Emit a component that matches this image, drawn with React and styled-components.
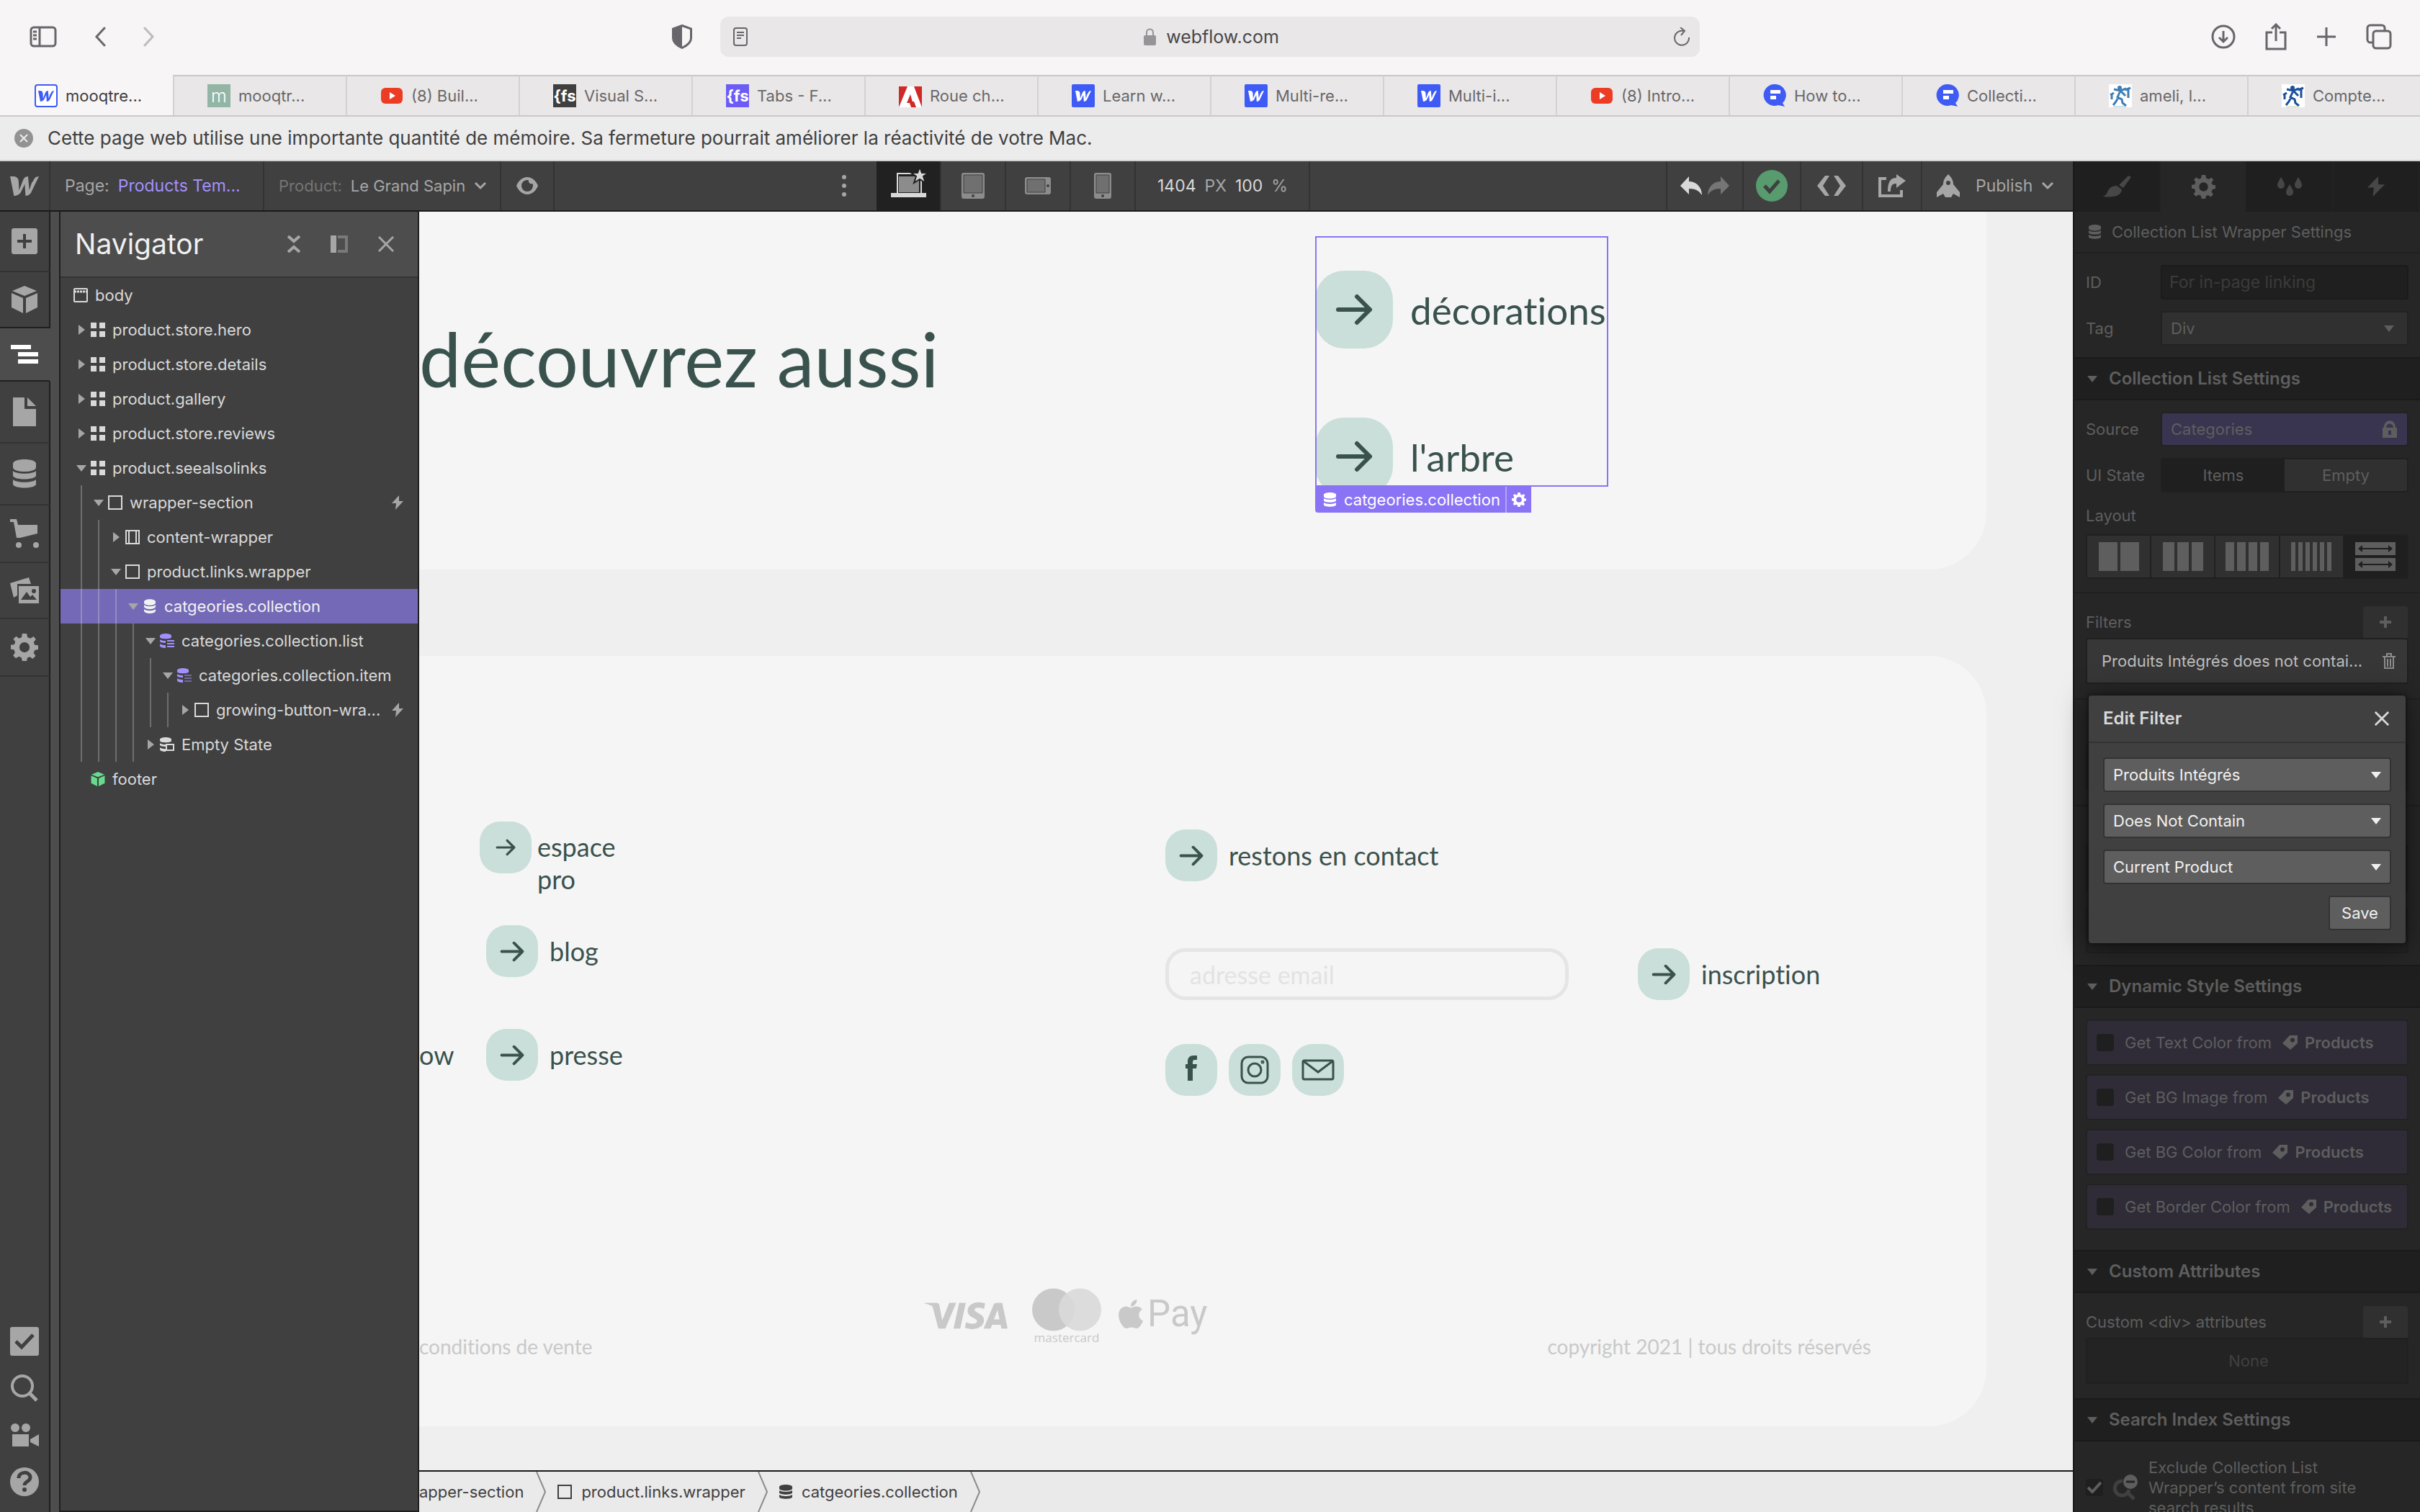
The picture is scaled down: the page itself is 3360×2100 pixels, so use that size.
import styled, { createGlobalStyle } from "styled-components";
import { FaApple } from "react-icons/fa";
import { SiVisa } from "react-icons/si";

const GlobalStyle = createGlobalStyle`
  * {
    box-sizing: border-box;
  }
  body {
    margin: 0;
    font-family: Inter, "Liberation Sans", sans-serif;
    font-size: 22px;
    line-height: 28px;
    background-color: #404040;
  }
  button, input, select {
    font: inherit;
    color: inherit;
  }
  button {
    border: 0;
    padding: 0;
    background: none;
  }
  svg {
    display: block;
    flex: none;
  }
  ul {
    list-style: none;
    margin: 0;
    padding: 0;
  }
`;

const Page = styled.div`
  display: flex;
  flex-direction: column;
  height: 100vh;
  overflow: hidden;
`;

/* ---------- icons ---------- */

const Icon = ({ w, h, box, children, ...rest }) => (
  <svg width={w} height={h || w} viewBox={box || `0 0 ${w} ${h || w}`} fill="currentColor" aria-hidden="true" {...rest}>
    {children}
  </svg>
);

const Line = ({ width = 2, children, ...rest }) => (
  <Icon fill="none" stroke="currentColor" strokeWidth={width} {...rest}>
    {children}
  </Icon>
);

const WebflowMark = ({ w }) => (
  <Icon w={w} h={Math.round((w * 27) / 40)} box="0 0 40 27">
    <path d="M30 9s-3 9.500-3.200 10.200C26.700 18.400 25 0 25 0c-4 0-6.200 2.800-7.300 5.900 0 0-4.800 12.500-5.200 13.600C12.400 18.500 11.800 6 11.800 6 11.500 2.200 8 0 5 0H0l5.400 27c4.300 0 8.600-2.500 10-6 0 0 4.800-9.800 5-10.200C20.400 11.200 21.600 27 21.600 27c4.300 0 7.100-2.800 8.200-5.900L40 0c-4.300 0-6.600 2.800-7.700 5.900z" />
  </Icon>
);

const Database = ({ w = 20, h }) => (
  <Icon w={w} h={h || w} box="0 0 32 40" preserveAspectRatio="none">
    <path d="M0 6c0-8 32-8 32 0v5c0 8-32 8-32 0z" />
    <path d="M0 16c5 5 27 5 32 0v7c-3 6-29 6-32 0z" />
    <path d="M0 28c5 5 27 5 32 0v7c-3 6-29 6-32 0z" />
  </Icon>
);

const ListDatabase = ({ kind }) => (
  <Icon w={20}>
    <path d="M0 3c0-4 16-4 16 0v2c0 3-16 3-16 0z" />
    <path d="M0 8c1 1.500 5 2 8 2v3c-4 0-8-1-8-2zM0 14c1 1.500 5 2 8 2v4c-4 0-8-1-8-3z" />
    {kind === "empty" ? (
      <path d="M8 9h12v10H8zm2 2v6h8v-6z" fillRule="evenodd" />
    ) : (
      <path d="M10 9h10v2H10zm0 4h10v2H10zm0 4h10v2H10z" opacity={kind === "item" ? 0.5 : 1} />
    )}
  </Icon>
);

const Cube = ({ w, h }) => (
  <Icon w={w} h={h} box="0 0 36 38">
    <path d="M18 0l17 7-17 7L1 7zM0 10l16 7v21L0 30zM36 10l-16 7v21l16-8z" />
  </Icon>
);

const Gear = ({ w }) => (
  <Icon w={w} box="0 0 24 24">
    <path
      fillRule="evenodd"
      d="M10 0h4l.600 3.200 2.600 1.100L20 2.500 22 5l-2 2.500 1 2.500 3 .300v3.600l-3 .600-1 2.500 1.800 2.600-2.600 2.500-2.600-1.800-2.200 1L14 24h-4l-.700-3-2.300-1-2.600 1.700L2 19.200l1.700-2.500L2.800 14 0 13.700V10l3-.400 1-2.400L2.200 4.800l2.500-2.500 2.500 1.900 2.300-1zM12 7.500a4.500 4.500 0 1 0 0 9 4.500 4.500 0 0 0 0-9z"
    />
  </Icon>
);

const Bolt = ({ w, h }) => (
  <Icon w={w} h={h} box="0 0 16 20" preserveAspectRatio="none">
    <path d="M10 0L0 11h6l-1 9L16 8h-6z" />
  </Icon>
);

const Caret = ({ open = true, w = 14 }) =>
  open ? (
    <Icon w={w} h={9} box="0 0 14 9">
      <path d="M0 0h14L7 9z" />
    </Icon>
  ) : (
    <Icon w={9} h={14}>
      <path d="M0 0l9 7-9 7z" />
    </Icon>
  );

const ChevronDown = () => (
  <Line w={18} h={12} width={3}>
    <path d="M2 2l7 7 7-7" />
  </Line>
);

const Cross = ({ w }) => (
  <Line w={w} box="0 0 22 22" width={3}>
    <path d="M1 1l20 20M21 1L1 21" />
  </Line>
);

const Plus = () => (
  <Icon w={16}>
    <path d="M6 0h4v6h6v4h-6v6H6v-6H0V6h6z" />
  </Icon>
);

const Tag = () => (
  <Icon w={21} h={20}>
    <path fillRule="evenodd" d="M0 11L10 0h11v11L11 20zM14 3.500a3 3 0 1 0 0 6 3 3 0 0 0 0-6z" />
  </Icon>
);

const Arrow = ({ w }) => (
  <Line w={w} h={Math.round((w * 44) / 52)} box="0 0 52 44" width={6} strokeLinecap="round" strokeLinejoin="round">
    <path d="M4 22h44M30 4l18 18-18 18" />
  </Line>
);

/* ---------- browser chrome ---------- */

const BrowserBar = styled.header`
  display: grid;
  grid-template-columns: 1fr 1360px 1fr;
  align-items: center;
  height: 104px;
  padding-bottom: 2px;
  flex: none;
  background-color: #f7f5f6;
  color: #68666a;
`;

const BarSide = styled.div`
  display: flex;
  align-items: center;
  padding: 0 39px 0 41px;
  gap: ${(props) => props.$gap}px;
`;

const IconButton = styled.button`
  display: flex;
  align-items: center;
  justify-content: center;
  opacity: ${(props) => (props.$dim ? 0.4 : 1)};
  margin-left: ${(props) => (props.$push ? "auto" : 0)};
`;

const Address = styled.div`
  display: grid;
  grid-template-columns: 1fr auto 1fr;
  align-items: center;
  height: 56px;
  padding: 0 14px 0 18px;
  border-radius: 12px;
  background-color: #e9e7e8;
`;

const Host = styled.div`
  display: flex;
  align-items: center;
  gap: 14px;
  font-size: 25px;
  color: #4a484a;
`;

const Reload = styled.button`
  justify-self: end;
`;

const Tabs = styled.nav`
  display: flex;
  height: 58px;
  flex: none;
  background-color: #e9e7e8;
  border-bottom: 2px solid #cbc9ca;
`;

const Tab = styled.a`
  flex: 1;
  display: flex;
  align-items: center;
  gap: 11px;
  padding-left: 46px;
  border-left: 2px solid ${(props) => (props.$active ? "transparent" : "#d3d1d2")};
  border-top: 2px solid ${(props) => (props.$active ? "transparent" : "#c9c7c8")};
  background-color: ${(props) => (props.$active ? "#f7f5f6" : "transparent")};
  color: ${(props) => (props.$active ? "#3f3d3f" : "#69676a")};
  text-decoration: none;
  white-space: nowrap;
`;

const Favicon = styled.span`
  display: flex;
  align-items: center;
  justify-content: center;
  width: 32px;
  height: 32px;
  font-size: ${(props) => props.$size || 22}px;
  font-weight: ${(props) => props.$weight || 700};
  color: ${(props) => props.$color || "#fff"};
  background-color: ${(props) => props.$bg || "transparent"};
  border: ${(props) => (props.$outline ? "2px solid #3f5bf6" : "0")};
  border-radius: ${(props) => props.$radius || 0}px;
`;

const YoutubeIcon = () => (
  <Icon w={32}>
    <rect x="1" y="5" width="30" height="22" rx="6" fill="#ec3d24" />
    <path d="M13 11v10l8-5z" fill="#fff" />
  </Icon>
);

const AdobeIcon = () => (
  <Icon w={32}>
    <path d="M0 3h32v29H0z" fill="#cf2a27" />
    <path d="M12 3h9l11 29h-8l-3-8h-6l3 8H0z" fill="#fff" />
    <path d="M16 14l5 18h-4l-2-6h-4z" fill="#cf2a27" />
  </Icon>
);

const ForumIcon = () => (
  <Icon w={32}>
    <path d="M16 0a15 15 0 0 1 11 26l3 5-9-2A15 15 0 1 1 16 0z" fill="#3f5bf6" />
    <path d="M10 8h14v5H10zM10 16h8v5h-8z" fill="#fff" />
  </Icon>
);

const AmeliIcon = ({ soft }) => (
  <Icon w={32}>
    <path d="M0 0h32v32H0z" fill="#fff" />
    <g fill="none" stroke={soft ? "#3d7db5" : "#1c4f9c"} strokeWidth="3">
      <path d="M2 15l5-3M4 13v8M7 7l9 2 8-3M16 9l-4 9 6 3 1 5 5 4M13 18l-3 6-4 5M17 10l6 6M27 5v14M23 8l7-3" />
      <circle cx="15" cy="5" r="1.500" />
    </g>
    <path d="M6 31h18" stroke={soft ? "#9fc3de" : "#bcd9a4"} />
  </Icon>
);

const favicons = {
  webflowOutline: (
    <Favicon $bg="#fff" $color="#3f5bf6" $outline $radius={4}>
      <WebflowMark w={22} />
    </Favicon>
  ),
  webflow: (
    <Favicon $bg="#3f5bf6" $radius={2}>
      <WebflowMark w={22} />
    </Favicon>
  ),
  m: <Favicon $bg="#93b5a5" $weight={300} $size={25}>m</Favicon>,
  fsDark: <Favicon $bg="#403f3f">{"{fs"}</Favicon>,
  fs: <Favicon $bg="#6c5cf5">{"{fs"}</Favicon>,
  youtube: <YoutubeIcon />,
  adobe: <AdobeIcon />,
  forum: <ForumIcon />,
  ameliSoft: <AmeliIcon soft />,
  ameli: <AmeliIcon />,
};

const tabs = [
  ["webflowOutline", "mooqtre..."],
  ["m", "mooqtr..."],
  ["youtube", "(8) Buil..."],
  ["fsDark", "Visual S..."],
  ["fs", "Tabs - F..."],
  ["adobe", "Roue ch..."],
  ["webflow", "Learn w..."],
  ["webflow", "Multi-re..."],
  ["webflow", "Multi-i..."],
  ["youtube", "(8) Intro..."],
  ["forum", "How to..."],
  ["forum", "Collecti..."],
  ["ameliSoft", "ameli, l..."],
  ["ameli", "Compte..."],
];

const Notice = styled.div`
  display: flex;
  align-items: center;
  gap: 20px;
  height: 62px;
  flex: none;
  padding-left: 20px;
  background-color: #ececec;
  border-bottom: 2px solid #d2d2d2;
  font-size: 26px;
  color: #404040;
`;

const Browser = () => (
  <>
    <BrowserBar>
      <BarSide $gap={52}>
        <IconButton aria-label="Sidebar">
          <Line w={38} h={30} width={3}>
            <rect x="2" y="2" width="34" height="26" rx="4" />
            <path d="M14 2v26M5 8h5M5 13h5M5 18h5" />
          </Line>
        </IconButton>
        <IconButton aria-label="Back">
          <Line w={16} h={28} width={3} strokeLinecap="round">
            <path d="M14 2L3 14l11 12" />
          </Line>
        </IconButton>
        <IconButton aria-label="Forward" $dim>
          <Line w={16} h={28} width={3} strokeLinecap="round">
            <path d="M2 2l11 12L2 26" />
          </Line>
        </IconButton>
        <IconButton aria-label="Privacy report" $push>
          <Icon w={28} h={34}>
            <path d="M14 1.500L26.500 6v13c0 6-6 10.500-12.500 13.500C7.500 29.500 1.500 25 1.500 19V6z" fill="none" stroke="currentColor" strokeWidth="3" />
            <path d="M14 1v32C7 30 1 25 1 19V6z" />
          </Icon>
        </IconButton>
      </BarSide>
      <Address>
        <Line w={20} h={26} width={2}>
          <rect x="1" y="1" width="18" height="24" rx="3" />
          <path d="M5 7h10M5 11h10M5 15h6" />
        </Line>
        <Host>
          <Icon w={17} h={24} color="#969496">
            <rect y="10" width="17" height="14" rx="2" />
            <path d="M4 11V6a4.500 4.500 0 0 1 9 0v5" fill="none" stroke="currentColor" strokeWidth="2" />
          </Icon>
          webflow.com
        </Host>
        <Reload aria-label="Reload">
          <Line w={22} h={26} width={2}>
            <path d="M13 5a10 10 0 1 0 8 9M9 0l6 5-5 6" />
          </Line>
        </Reload>
      </Address>
      <BarSide $gap={41}>
        <IconButton aria-label="Downloads" $push>
          <Line w={34} width={3}>
            <circle cx="17" cy="17" r="15" />
            <path d="M17 9v15M11 18l6 6 6-6" />
          </Line>
        </IconButton>
        <IconButton aria-label="Share">
          <Line w={30} h={38} width={3}>
            <path d="M10 13H2v23h26V13h-8M15 25V2M9 8l6-6 6 6" />
          </Line>
        </IconButton>
        <IconButton aria-label="New tab">
          <Line w={28} width={3}>
            <path d="M14 1v26M1 14h26" />
          </Line>
        </IconButton>
        <IconButton aria-label="Tab overview">
          <Line w={36} h={36} width={3}>
            <rect x="10" y="10" width="24" height="24" rx="4" />
            <path d="M10 26H6a4 4 0 0 1-4-4V6a4 4 0 0 1 4-4h16a4 4 0 0 1 4 4v4" />
          </Line>
        </IconButton>
      </BarSide>
    </BrowserBar>
    <Tabs>
      {tabs.map(([icon, label], i) => (
        <Tab key={label} href="#" $active={i === 0}>
          {favicons[icon]}
          {label}
        </Tab>
      ))}
    </Tabs>
    <Notice>
      <IconButton aria-label="Fermer">
        <Icon w={26} color="#929292">
          <circle cx="13" cy="13" r="13" />
          <path d="M8 8l10 10M18 8L8 18" stroke="#ececec" strokeWidth="2" />
        </Icon>
      </IconButton>
      Cette page web utilise une importante quantité de mémoire. Sa fermeture pourrait améliorer la réactivité de votre Mac.
    </Notice>
  </>
);

/* ---------- designer top bar ---------- */

const Builder = styled.div`
  flex: 1;
  min-height: 0;
  display: flex;
`;

const Main = styled.div`
  flex: 1;
  min-width: 0;
  display: flex;
  flex-direction: column;
`;

const TopBar = styled.div`
  display: flex;
  height: 70px;
  flex: none;
  background-color: #404040;
  border-bottom: 2px solid #1a1a1a;
  font-size: 23px;
  color: #a6a6a6;
`;

const Cell = styled.button`
  display: flex;
  align-items: center;
  justify-content: ${(props) => (props.$start ? "flex-start" : "center")};
  gap: 12px;
  width: ${(props) => props.$w}px;
  padding-left: ${(props) => (props.$start ? 20 : 0)}px;
  flex: none;
  border-right: ${(props) => (props.$bare ? 0 : "2px solid #333")};
  background-color: ${(props) => (props.$active ? "#212121" : "transparent")};
  font-size: ${(props) => props.$size || 23}px;
  white-space: nowrap;
`;

const Ink = styled.span`
  color: ${(props) => props.$c};
`;

const PublishLabel = styled.span`
  padding-left: 10px;
`;

const Spacer = styled.div`
  flex: ${(props) => props.$grow} 1 0;
  border-right: ${(props) => (props.$line ? "2px solid #333" : 0)};
`;

const Toolbar = () => (
  <TopBar>
    <Cell $w={70} aria-label="Menu">
      <WebflowMark w={40} />
    </Cell>
    <Cell $w={297} $start>
      Page: <Ink $c="#a390ff">Products Tem...</Ink>
    </Cell>
    <Cell $w={329} $start $size={22}>
      <Ink $c="#757575">Product:</Ink> Le Grand Sapin
      <ChevronDown />
    </Cell>
    <Cell $w={74} aria-label="Preview">
      <Icon w={30} h={24}>
        <path fillRule="evenodd" d="M15 0c8 0 13 7 15 12-2 5-7 12-15 12S2 17 0 12C2 7 7 0 15 0zm0 4a8 8 0 1 0 8 8c0-1 0-2-.500-3a4 4 0 0 1-5.500-4.500C16 4 16 4 15 4z" />
      </Icon>
    </Cell>
    <Spacer $grow={0.42} />
    <Cell $w={90} $bare aria-label="More">
      <Icon w={6} h={30}>
        <circle cx="3" cy="3" r="3" />
        <circle cx="3" cy="15" r="3" />
        <circle cx="3" cy="27" r="3" />
      </Icon>
    </Cell>
    <Cell $w={90} $active aria-label="Desktop">
      <Icon w={56} h={52} color="#d9d9d9">
        <path fillRule="evenodd" d="M12 8h35v28h6v6H4v-6h8zm2 2v26h31V10z" />
        <path d="M15 13h28v22H15z" fill="#8c8c8c" />
        <path d="M44 0l3 8h9l-7 5 3 9-8-5-8 5 3-9-7-5h9z" stroke="#212121" strokeWidth="2" />
      </Icon>
    </Cell>
    <Cell $w={90} aria-label="Tablet">
      <Icon w={32} h={36} color="#8c8c8c">
        <rect width="32" height="36" rx="3" />
        <path d="M3 3h26v25H3z" fill="#707070" stroke="#404040" />
        <circle cx="16" cy="32" r="2" fill="#404040" />
      </Icon>
    </Cell>
    <Cell $w={90} aria-label="Mobile landscape">
      <Icon w={36} h={24} color="#8c8c8c">
        <rect width="36" height="24" rx="3" />
        <path d="M3 3h25v18H3z" fill="#707070" stroke="#404040" />
        <circle cx="32" cy="12" r="2" fill="#404040" />
      </Icon>
    </Cell>
    <Cell $w={90} aria-label="Mobile portrait">
      <Icon w={24} h={36} color="#8c8c8c">
        <rect width="24" height="36" rx="3" />
        <path d="M3 3h18v25H3z" fill="#707070" stroke="#404040" />
        <circle cx="12" cy="32" r="2" fill="#404040" />
      </Icon>
    </Cell>
    <Cell $w={242}>
      <Ink $c="#d9d9d9">1404</Ink> PX <Ink $c="#d9d9d9">100</Ink> %
    </Cell>
    <Spacer $grow={0.58} $line />
    <Cell $w={106} aria-label="Undo and redo">
      <Icon w={68} h={26}>
        <path d="M12 0v7c10 0 18 8 18 19-4-6-9-9-18-9v8L0 13z" fill="#d9d9d9" />
        <path d="M56 0v7c-10 0-18 8-18 19 4-6 9-9 18-9v8l12-12z" fill="#757575" />
      </Icon>
    </Cell>
    <Cell $w={80} aria-label="Saved">
      <Icon w={44}>
        <circle cx="22" cy="22" r="22" fill="#579b6f" />
        <path d="M12 22l7 8 13-15" fill="none" stroke="#404040" strokeWidth="5" />
      </Icon>
    </Cell>
    <Cell $w={86} aria-label="Code">
      <Icon w={40} h={28}>
        <path d="M11 0h6L8 14l9 14h-6L0 14zM29 0h-6l9 14-9 14h6l11-14z" />
      </Icon>
    </Cell>
    <Cell $w={82} aria-label="Export">
      <Icon w={38} h={32}>
        <path d="M0 4h11v4H4v20h26v-6h4v10H0z" />
        <path d="M25 0l13 9-13 10v-6c-6 0-8 3-8 11h-4c0-12 3-19 12-19z" />
      </Icon>
    </Cell>
    <Cell $w={209} $start $bare>
      <Icon w={32} h={32}>
        <path fillRule="evenodd" d="M16 0c4 4 7 8 7 14l9 11v7l-9-5-3 5h-8l-3-5-9 5v-7l9-11c0-6 3-10 7-14zm0 9a3 3 0 1 0 0 6 3 3 0 0 0 0-6z" />
      </Icon>
      <PublishLabel>Publish</PublishLabel>
      <ChevronDown />
    </Cell>
  </TopBar>
);

/* ---------- left rail and navigator ---------- */

const Workspace = styled.div`
  flex: 1;
  min-height: 0;
  display: flex;
`;

const Rail = styled.nav`
  display: flex;
  flex-direction: column;
  width: 70px;
  flex: none;
  background-color: #404040;
  color: #a6a6a6;
`;

const RailButton = styled.button`
  display: flex;
  align-items: center;
  justify-content: center;
  height: ${(props) => props.$h}px;
  border-right: 2px solid ${(props) => (props.$active ? "#4d4d4d" : "#1f1f1f")};
  border-bottom: 2px solid ${(props) => (props.$last ? "#1f1f1f" : "#333")};
  background-color: ${(props) => (props.$active ? "#4d4d4d" : "transparent")};
  color: ${(props) => (props.$active ? "#fff" : "inherit")};
`;

const RailFoot = styled.div`
  flex: 1;
  display: flex;
  flex-direction: column;
  justify-content: flex-end;
  align-items: center;
  gap: 25px;
  padding-bottom: 22px;
  border-right: 2px solid #1f1f1f;

  & > button {
    height: 40px;
  }
`;

const Gutter = styled.div`
  width: 12px;
  flex: none;
  background-color: #4d4d4d;
`;

const NavPanel = styled.section`
  width: 500px;
  flex: none;
  background-color: #404040;
  border: solid #1f1f1f;
  border-width: 0 2px 2px;
  color: #d9d9d9;
`;

const NavHead = styled.header`
  display: flex;
  align-items: center;
  gap: 42px;
  height: 92px;
  padding: 0 33px 0 20px;
  background-color: #4d4d4d;
  border-bottom: 2px solid #333;
  color: #a6a6a6;
`;

const NavTitle = styled.h1`
  flex: 1;
  margin: 0;
  font-size: 39px;
  font-weight: 400;
  line-height: 48px;
  color: #f0f0f0;
`;

const TreeRow = styled.li`
  display: flex;
  align-items: center;
  height: 48px;
  padding: 0 20px 0 16px;
  background-color: ${(props) => (props.$selected ? "#7469b6" : "transparent")};
  color: ${(props) => (props.$selected ? "#f2f2f2" : "inherit")};
`;

const Guide = styled.span`
  align-self: stretch;
  width: 12px;
  margin-left: 12px;
  border-left: 2px solid rgba(217, 217, 217, 0.3);
`;

const CaretCell = styled.span`
  display: flex;
  justify-content: center;
  width: 26px;
  color: #a6a6a6;
`;

const TreeLabel = styled.button`
  display: flex;
  align-items: center;
  gap: 10px;
  padding-left: ${(props) => (props.$root ? 2 : 0)}px;
  white-space: nowrap;
`;

const RowEnd = styled.span`
  margin-left: auto;
  color: #a6a6a6;
`;

const TreeIcon = ({ kind }) => {
  switch (kind) {
    case "body":
      return (
        <Line w={20}>
          <rect x="1" y="1" width="18" height="18" rx="1" />
          <path d="M1 5h18" strokeWidth="3" strokeDasharray="3 1" />
        </Line>
      );
    case "section":
      return (
        <Icon w={20}>
          <path d="M0 0h8v8H0zM12 0h8v8h-8zM0 12h8v8H0zM12 12h8v8h-8z" />
        </Icon>
      );
    case "container":
      return (
        <Line w={20}>
          <path d="M1 1h18v18H1zM5 1v18M15 1v18" />
        </Line>
      );
    case "block":
      return (
        <Line w={20}>
          <path d="M1 1h18v18H1z" />
        </Line>
      );
    case "collection":
      return (
        <Icon w={20}>
          <path d="M2 4c0-5 16-5 16 0v1c0 5-16 5-16 0zM2 8c3 3 13 3 16 0v3c-2 4-14 4-16 0zM2 14c3 3 13 3 16 0v3c-2 4-14 4-16 0z" />
        </Icon>
      );
    case "list":
    case "item":
      return (
        <Ink $c="#a390ff">
          <ListDatabase kind={kind} />
        </Ink>
      );
    case "empty":
      return <ListDatabase kind="empty" />;
    default:
      return (
        <Ink $c="#67da8d">
          <Cube w={20} h={20} />
        </Ink>
      );
  }
};

const tree = [
  { label: "body", icon: "body", root: true, depth: 0 },
  { label: "product.store.hero", icon: "section", depth: 0, open: false },
  { label: "product.store.details", icon: "section", depth: 0, open: false },
  { label: "product.gallery", icon: "section", depth: 0, open: false },
  { label: "product.store.reviews", icon: "section", depth: 0, open: false },
  { label: "product.seealsolinks", icon: "section", depth: 0, open: true },
  { label: "wrapper-section", icon: "block", depth: 1, open: true, bolt: true },
  { label: "content-wrapper", icon: "container", depth: 2, open: false },
  { label: "product.links.wrapper", icon: "block", depth: 2, open: true },
  { label: "catgeories.collection", icon: "collection", depth: 3, open: true, selected: true },
  { label: "categories.collection.list", icon: "list", depth: 4, open: true },
  { label: "categories.collection.item", icon: "item", depth: 5, open: true },
  { label: "growing-button-wra...", icon: "block", depth: 6, open: false, bolt: true },
  { label: "Empty State", icon: "empty", depth: 4, open: false },
  { label: "footer", icon: "symbol", depth: 0 },
];

const LeftRail = () => (
  <Rail>
    <RailButton $h={84} aria-label="Add elements">
      <Icon w={36}>
        <path fillRule="evenodd" d="M2 0h32l2 2v32l-2 2H2l-2-2V2zm14 8v8H8v4h8v8h4v-8h8v-4h-8V8z" />
      </Icon>
    </RailButton>
    <RailButton $h={78} $last aria-label="Symbols">
      <Cube w={36} h={38} />
    </RailButton>
    <RailButton $h={74} $active $last aria-label="Navigator">
      <Icon w={38} h={26}>
        <path d="M0 0h28v6H0zM10 10h28v6H10zM10 20h28v6H10z" />
      </Icon>
    </RailButton>
    <RailButton $h={86} aria-label="Pages">
      <Icon w={32} h={40}>
        <path d="M0 0h16v16h16v24H0zM20 0l12 12H20z" />
      </Icon>
    </RailButton>
    <RailButton $h={86} aria-label="CMS">
      <Database w={32} h={40} />
    </RailButton>
    <RailButton $h={80} aria-label="Ecommerce">
      <Icon w={40}>
        <path d="M0 0h9l2 8h27v12L14 26H9L5 4H0z" />
        <circle cx="12" cy="36" r="4" />
        <circle cx="36" cy="36" r="4" />
      </Icon>
    </RailButton>
    <RailButton $h={78} aria-label="Assets">
      <Icon w={40} h={36}>
        <path d="M0 8l26-8 3 9H10v16l-5 3z" />
        <path fillRule="evenodd" d="M12 12h28v24H12zm3 19h22l-6-7-3 3-5-7zm18-15a3 3 0 1 0 0 6 3 3 0 0 0 0-6z" />
      </Icon>
    </RailButton>
    <RailButton $h={80} aria-label="Settings">
      <Gear w={38} />
    </RailButton>
    <RailFoot>
      <IconButton aria-label="Audit">
        <Icon w={40}>
          <rect width="40" height="40" rx="3" />
          <path d="M8 20l8 8 16-17" fill="none" stroke="#404040" strokeWidth="5" />
        </Icon>
      </IconButton>
      <IconButton aria-label="Search">
        <Line w={38} width={4}>
          <circle cx="16" cy="16" r="14" />
          <path d="M26 26l10 10" strokeWidth="5" />
        </Line>
      </IconButton>
      <IconButton aria-label="Video tutorials">
        <Icon w={40} h={32}>
          <circle cx="7" cy="6" r="6" />
          <circle cx="22" cy="6" r="6" />
          <path d="M3 15h23v17H3zM28 22l12-7v17l-12-6z" />
        </Icon>
      </IconButton>
      <IconButton aria-label="Help">
        <Icon w={40}>
          <circle cx="20" cy="20" r="20" />
          <path d="M12 15c0-10 16-10 16-1 0 6-8 5-8 11" fill="none" stroke="#404040" strokeWidth="5" />
          <circle cx="20" cy="31" r="3" fill="#404040" />
        </Icon>
      </IconButton>
    </RailFoot>
  </Rail>
);

const Navigator = () => (
  <NavPanel>
    <NavHead>
      <NavTitle>Navigator</NavTitle>
      <IconButton aria-label="Collapse all">
        <Line w={18} h={24} width={4}>
          <path d="M1 1l8 7 8-7M1 23l8-7 8 7" />
        </Line>
      </IconButton>
      <IconButton aria-label="Dock">
        <Icon w={24}>
          <path d="M0 0h8v24H0z" />
          <path d="M10 0h14v24H10v-4h10V4H10z" opacity="0.5" />
        </Icon>
      </IconButton>
      <IconButton aria-label="Close">
        <Cross w={22} />
      </IconButton>
    </NavHead>
    <ul>
      {tree.map((node) => (
        <TreeRow key={node.label} $selected={node.selected}>
          {Array.from({ length: node.depth }, (_, i) => (
            <Guide key={i} />
          ))}
          {!node.root && <CaretCell>{node.open !== undefined && <Caret open={node.open} />}</CaretCell>}
          <TreeLabel $root={node.root}>
            <TreeIcon kind={node.icon} />
            {node.label}
          </TreeLabel>
          {node.bolt && (
            <RowEnd>
              <Bolt w={16} h={20} />
            </RowEnd>
          )}
        </TreeRow>
      ))}
    </ul>
  </NavPanel>
);

/* ---------- canvas ---------- */

const Stage = styled.div`
  flex: 1;
  min-width: 0;
  display: flex;
  flex-direction: column;
  background-color: #efefef;
`;

const Site = styled.div`
  flex: 1;
  min-height: 0;
  overflow: hidden;
  padding-right: 120px;
  font-family: Lato, "Open Sans", sans-serif;
  font-variant-ligatures: none;
  font-size: 36px;
  line-height: 45px;
  color: #3a524d;
`;

const SeeAlso = styled.section`
  display: flex;
  align-items: flex-start;
  padding: 34px 525px 79px 0;
  border-radius: 0 0 80px 0;
  background-color: #f5f5f5;
`;

const Heading = styled.h2`
  flex: 1;
  margin: 0;
  padding-top: 110px;
  font-size: 104px;
  font-weight: 400;
  line-height: 120px;
  white-space: nowrap;
`;

const Collection = styled.div`
  width: 407px;
`;

/* the outline is drawn above the items, like a selection frame */
const Selection = styled.div`
  position: relative;
  height: 348px;
  padding-top: 48px;
  overflow: hidden;

  &::after {
    content: "";
    position: absolute;
    inset: 0;
    border: 2px solid #8a74f5;
  }
`;

const Links = styled.div`
  display: grid;
  gap: ${(props) => props.$gap}px;
  grid-auto-rows: ${(props) => props.$row}px;
`;

const LinkItem = styled.a`
  display: flex;
  align-items: ${(props) => (props.$wrap ? "flex-start" : "center")};
  gap: ${(props) => props.$gap || 16}px;
  font-size: ${(props) => (props.$large ? 53 : 36)}px;
  color: inherit;
  text-decoration: none;
  white-space: nowrap;
`;

const Bubble = styled.span`
  display: flex;
  align-items: center;
  justify-content: center;
  width: ${(props) => props.$size || 72}px;
  height: ${(props) => props.$size || 72}px;
  flex: none;
  border-radius: ${(props) => (props.$size ? 40 : 28)}px;
  background-color: #cadfd9;
`;

const Wrapped = styled.span`
  padding-top: 13px;
  white-space: normal;
`;

const Badge = styled.div`
  display: flex;
  width: 300px;
  height: 36px;
  background-color: #8a74f5;
  border-bottom-left-radius: 4px;
  color: #fff;
  font-family: Inter, sans-serif;
  font-size: 22px;
  line-height: 28px;
`;

const BadgeLabel = styled.span`
  flex: 1;
  display: flex;
  align-items: center;
  gap: 11px;
  padding-left: 12px;
  border-right: 2px solid #b3a4f9;
`;

const BadgeButton = styled.button`
  display: flex;
  align-items: center;
  justify-content: center;
  width: 34px;
`;

const Footer = styled.footer`
  margin-top: 120px;
  padding: 230px 160px 91px 0;
  border-radius: 0 80px 80px 0;
  background-color: #f5f5f5;
`;

const FooterTop = styled.div`
  display: flex;
  align-items: flex-start;
`;

const Clipped = styled(LinkItem)`
  align-self: flex-start;
  width: 84px;
  height: 72px;
  margin-top: 288px;
`;

const FooterLinks = styled(Links)`
  width: 952px;
`;

const Inset = styled.div`
  padding-left: 9px;
`;

const EspaceLink = styled(LinkItem)`
  width: 200px;
`;

const Contact = styled.div`
  padding-top: 11px;
`;

const Subscribe = styled.form`
  display: flex;
  gap: 96px;
  margin: 93px 0 61px;
`;

const Email = styled.input`
  width: 560px;
  height: 72px;
  padding: 0 29px;
  border: 5px solid #e5e5e5;
  border-radius: 28px;
  background-color: transparent;
  font-size: 34px;

  &::placeholder {
    color: #e3e3e3;
    opacity: 1;
  }
`;

const Socials = styled.div`
  display: flex;
  gap: 16px;
`;

const FooterBottom = styled.div`
  display: grid;
  grid-template-columns: 702px auto 1fr;
  align-items: end;
  margin-top: 267px;
  font-size: 28px;
  line-height: 36px;
  color: #c9c9c9;
`;

const Legal = styled.span`
  justify-self: ${(props) => (props.$end ? "end" : "start")};
  padding-bottom: 2px;
`;

const Payments = styled.div`
  display: flex;
  align-items: flex-start;
  height: 101px;
`;

const Visa = styled.div`
  width: 149px;
`;

const Mastercard = styled.div`
  display: flex;
  flex-direction: column;
  align-items: center;
  width: 96px;
  font-family: "Open Sans", sans-serif;
  font-size: 17px;
  line-height: 18px;
`;

const ApplePay = styled.div`
  display: flex;
  align-items: center;
  padding: 6px 0 0 18px;
  font-family: Roboto, sans-serif;
  font-size: 51px;
  line-height: 60px;
`;

const ArrowLink = ({ large, children }) => (
  <LinkItem href="#" $large={large} $gap={large ? 24 : 16}>
    <Bubble $size={large && 108}>
      <Arrow w={large ? 52 : 34} />
    </Bubble>
    {children}
  </LinkItem>
);

const Canvas = () => (
  <Site>
    <SeeAlso>
      <Heading>découvrez aussi</Heading>
      <Collection>
        <Selection>
          <Links $row={108} $gap={96}>
            <ArrowLink large>décorations</ArrowLink>
            <ArrowLink large>l'arbre</ArrowLink>
          </Links>
        </Selection>
        <Badge>
          <BadgeLabel>
            <Database w={17} h={20} />
            catgeories.collection
          </BadgeLabel>
          <BadgeButton aria-label="Element settings">
            <Gear w={20} />
          </BadgeButton>
        </Badge>
      </Collection>
    </SeeAlso>
    <Footer>
      <FooterTop>
        <Clipped href="#">ow</Clipped>
        <FooterLinks $row={72} $gap={72}>
          <EspaceLink href="#" $wrap $gap={8}>
            <Bubble>
              <Arrow w={28} />
            </Bubble>
            <Wrapped>espace pro</Wrapped>
          </EspaceLink>
          <Inset>
            <ArrowLink>blog</ArrowLink>
          </Inset>
          <Inset>
            <ArrowLink>presse</ArrowLink>
          </Inset>
        </FooterLinks>
        <Contact>
          <ArrowLink>restons en contact</ArrowLink>
          <Subscribe>
            <Email type="email" placeholder="adresse email" aria-label="adresse email" />
            <ArrowLink>inscription</ArrowLink>
          </Subscribe>
          <Socials>
            <a href="#" aria-label="Facebook">
              <Bubble>
                <Icon w={16} h={40} color="#3a524d">
                  <path d="M16 0v6h-3c-2 0-3 1-3 3v3h6l-1 6h-5v17H3V18H0v-6h3V8c0-5 3-8 8-8z" />
                </Icon>
              </Bubble>
            </a>
            <a href="#" aria-label="Instagram">
              <Bubble>
                <Line w={40} width={3} color="#3a524d">
                  <rect x="2" y="2" width="36" height="36" rx="9" />
                  <circle cx="20" cy="20" r="9" />
                  <circle cx="31" cy="9" r="1" />
                </Line>
              </Bubble>
            </a>
            <a href="#" aria-label="Email">
              <Bubble>
                <Line w={46} h={30} width={3} color="#3a524d">
                  <rect x="2" y="2" width="42" height="26" rx="2" />
                  <path d="M3 3l20 15L43 3" />
                </Line>
              </Bubble>
            </a>
          </Socials>
        </Contact>
      </FooterTop>
      <FooterBottom>
        <Legal>conditions de vente</Legal>
        <Payments>
          <Visa>
            <SiVisa size={115} viewBox="0 4 24 24" aria-label="Visa" />
          </Visa>
          <Mastercard>
            <Icon w={96} h={60}>
              <circle cx="29.500" cy="30" r="29.500" fill="#c9c9c9" />
              <circle cx="66.500" cy="30" r="29.500" fill="#d9d9d9" fillOpacity="0.9" />
            </Icon>
            mastercard
          </Mastercard>
          <ApplePay>
            <FaApple size={46} />
            Pay
          </ApplePay>
        </Payments>
        <Legal $end>copyright 2021 | tous droits réservés</Legal>
      </FooterBottom>
    </Footer>
  </Site>
);

const Breadcrumbs = styled.nav`
  display: flex;
  height: 58px;
  flex: none;
  border-top: 2px solid #1a1a1a;
  background-color: #eaeaea;
  color: #404040;
`;

const Crumb = styled.a`
  display: flex;
  align-items: center;
  gap: 13px;
  padding-left: ${(props) => (props.$first ? 0 : 16)}px;
  color: inherit;
  text-decoration: none;
  white-space: nowrap;

  & > :last-child {
    margin-left: 4px;
    color: #8c8c8c;
  }
`;

const CrumbEnd = () => (
  <Line w={14} h={56}>
    <path d="M1 0l12 28L1 56" />
  </Line>
);

const Crumbs = () => (
  <Breadcrumbs>
    <Crumb href="#" $first>
      apper-section
      <CrumbEnd />
    </Crumb>
    <Crumb href="#">
      <TreeIcon kind="block" />
      product.links.wrapper
      <CrumbEnd />
    </Crumb>
    <Crumb href="#">
      <Database w={18} h={20} />
      catgeories.collection
      <CrumbEnd />
    </Crumb>
  </Breadcrumbs>
);

/* ---------- settings panel ---------- */

const Settings = styled.aside`
  position: relative;
  width: 482px;
  flex: none;
  border-left: 2px solid #1a1a1a;
  background-color: #262626;
  color: #5e5e5e;
`;

const Scroll = styled.div`
  height: 100%;
  overflow: hidden;
`;

const PanelTabs = styled.div`
  display: grid;
  grid-template-columns: repeat(4, 1fr);
  height: 70px;
`;

const PanelTab = styled.button`
  display: flex;
  align-items: center;
  justify-content: center;
  background-color: ${(props) => (props.$active ? "#262626" : "#1f1f1f")};
  border-right: 2px solid ${(props) => (props.$active ? "#1f1f1f" : "#222")};
  color: ${(props) => (props.$active ? "#5e5e5e" : "#474747")};
`;

const PanelTitle = styled.div`
  display: flex;
  align-items: center;
  gap: 15px;
  height: 58px;
  padding-left: 20px;
  border-bottom: 2px solid #202020;
`;

const SectionHead = styled.h3`
  display: flex;
  align-items: center;
  gap: 16px;
  height: 60px;
  margin: 0;
  padding-left: 18px;
  background-color: #1f1f1f;
  border: solid #1a1a1a;
  border-width: 2px 0;
  font-size: 24px;
  font-weight: 600;
`;

const Group = styled.div`
  padding: ${(props) => props.$pad || "18px 16px 20px"};
  border-bottom: ${(props) => (props.$line ? "2px solid #202020" : 0)};
`;

const Field = styled.div`
  display: grid;
  grid-template-columns: 104px 1fr;
  align-items: center;
  height: 48px;
  margin-bottom: ${(props) => (props.$last ? 0 : 16)}px;
`;

const TextInput = styled.input`
  width: 100%;
  height: 48px;
  padding: 0 10px;
  border: 2px solid #1b1b1b;
  border-radius: 4px;
  background-color: #1f1f1f;
  font-size: 23px;

  &::placeholder {
    color: #3b3b3b;
    opacity: 1;
  }
`;

const SelectWrap = styled.div`
  display: grid;
  align-items: center;

  & > * {
    grid-area: 1 / 1;
  }

  & > svg {
    justify-self: end;
    margin-right: ${(props) => props.$inset || 14}px;
    pointer-events: none;
  }
`;

const Select = styled.select`
  appearance: none;
  width: 100%;
  height: 48px;
  padding: 0 12px;
  border: 2px solid ${(props) => (props.$modal ? "#333" : "#222")};
  border-radius: 4px;
  background-color: ${(props) => (props.$modal ? "#5e5e5e" : props.$purple ? "#393550" : "#303030")};
`;

const Segments = styled.div`
  display: grid;
  grid-template-columns: 1fr 1fr;
  border-radius: 4px;
  overflow: hidden;
  border: 2px solid #202020;
`;

const Segment = styled.button`
  height: 44px;
  background-color: ${(props) => (props.$active ? "#1f1f1f" : "#303030")};
`;

const FieldLabel = styled.div`
  padding: 18px 0 12px;
`;

const Layouts = styled.div`
  display: grid;
  grid-template-columns: repeat(5, 1fr);
  gap: 2px;
  height: 62px;
  padding: 2px;
  background-color: #202020;
  border-radius: 4px;
`;

const LayoutButton = styled.button`
  display: flex;
  align-items: center;
  justify-content: center;
  background-color: ${(props) => (props.$active ? "#1f1f1f" : "#303030")};
`;

const ListHead = styled.div`
  display: flex;
  align-items: center;
  justify-content: space-between;
  height: 44px;
`;

const AddButton = styled.button`
  display: flex;
  align-items: center;
  justify-content: center;
  width: 62px;
  height: 44px;
  margin-right: 1px;
  border-radius: 4px 4px 0 0;
  background-color: #303030;
`;

const Row = styled.div`
  display: flex;
  align-items: center;
  justify-content: ${(props) => (props.$center ? "center" : "space-between")};
  height: 64px;
  margin-top: ${(props) => (props.$spaced ? 22 : 0)}px;
  padding: 0 16px 0 20px;
  border: 2px solid #202020;
  border-radius: 4px;
  background-color: ${(props) => (props.$filled ? "#373737" : "#232323")};
  color: ${(props) => (props.$filled ? "#bdbdbd" : "#404040")};
  white-space: nowrap;
`;

const Binding = styled.label`
  display: flex;
  align-items: center;
  gap: 15px;
  height: 64px;
  margin-bottom: 12px;
  padding-left: 13px;
  border: 2px solid #222;
  border-radius: 4px;
  background-color: #2f2c38;
  white-space: nowrap;

  & > strong {
    display: flex;
    align-items: center;
    gap: 10px;
    font-weight: 600;
  }
`;

const Tick = styled.input`
  appearance: none;
  width: 24px;
  height: 24px;
  margin: 0;
  border-radius: 4px;
  background-color: #1f1f1f;
`;

const TickWrap = styled.span`
  display: grid;
  place-items: center;

  & > * {
    grid-area: 1 / 1;
  }
`;

const Exclude = styled.label`
  display: grid;
  grid-template-columns: 24px 35px 1fr;
  align-items: center;
  column-gap: 14px;
  padding: 22px 60px 0 16px;
`;

const columnGroups = [
  [2, 26],
  [3, 16],
  [4, 12],
  [6, 6],
];

const LayoutPicker = () => (
  <Layouts>
    {columnGroups.map(([count, width]) => {
      const total = count * width + (count - 1) * 4;
      return (
        <LayoutButton key={count} aria-label={`${count} columns`}>
          <Icon w={total} h={40}>
            {Array.from({ length: count }, (_, i) => (
              <rect key={i} x={i * (width + 4)} width={width} height="40" />
            ))}
          </Icon>
        </LayoutButton>
      );
    })}
    <LayoutButton $active aria-label="Full width">
      <Icon w={56} h={40}>
        <path d="M0 0h56v18H0zM0 22h56v18H0z" />
        <path d="M8 9h40M8 31h40" stroke="#1f1f1f" strokeWidth="2" />
        <path d="M4 9l6-5v10zM52 9l-6-5v10zM4 31l6-5v10zM52 31l-6-5v10z" fill="#1f1f1f" />
      </Icon>
    </LayoutButton>
  </Layouts>
);

const Modal = styled.section`
  position: absolute;
  top: 742px;
  left: 20px;
  right: 20px;
  border-radius: 4px;
  background-color: #404040;
  box-shadow: 0 4px 40px rgba(0, 0, 0, 0.5), 0 0 6px rgba(0, 0, 0, 0.6);
  color: #f0f0f0;
`;

const ModalHead = styled.header`
  display: flex;
  align-items: center;
  justify-content: space-between;
  height: 66px;
  padding: 0 23px 0 20px;
  border-bottom: 2px solid #333;
  font-size: 24px;
  font-weight: 600;
  color: #d9d9d9;
`;

const ModalBody = styled.div`
  display: grid;
  gap: 16px;
  padding: 20px 20px 18px;
`;

const Save = styled.button`
  justify-self: end;
  width: 87px;
  height: 48px;
  border: 2px solid #333;
  border-radius: 4px;
  background-color: #5e5e5e;
`;

const bindings = ["Get Text Color from", "Get BG Image from", "Get BG Color from", "Get Border Color from"];

const filterParts = ["Produits Intégrés", "Does Not Contain", "Current Product"];

const Head = ({ children }) => (
  <SectionHead>
    <Caret />
    {children}
  </SectionHead>
);

const SettingsPanel = () => (
  <Settings>
    <Scroll>
      <PanelTabs>
        <PanelTab aria-label="Style">
          <Icon w={40} h={30}>
            <path d="M36 0l4 2-11 15-6-4zM20 14l7 5c-1 8-8 12-27 10 7-2 6-6 9-10s7-5 11-5z" />
          </Icon>
        </PanelTab>
        <PanelTab $active aria-label="Settings">
          <Gear w={33} />
        </PanelTab>
        <PanelTab aria-label="Effects">
          <Icon w={34} h={26}>
            <path d="M5 0c3 5 5 8 5 11a5 5 0 0 1-10 0C0 8 2 5 5 0zM29 0c3 5 5 8 5 11a5 5 0 0 1-10 0c0-3 2-6 5-11zM17 10c3 5 5 8 5 11a5 5 0 0 1-10 0c0-3 2-6 5-11z" />
          </Icon>
        </PanelTab>
        <PanelTab aria-label="Interactions">
          <Bolt w={24} h={28} />
        </PanelTab>
      </PanelTabs>
      <PanelTitle>
        <Database w={17} h={20} />
        Collection List Wrapper Settings
      </PanelTitle>
      <Group $pad="16px">
        <Field>
          <label htmlFor="element-id">ID</label>
          <TextInput id="element-id" placeholder="For in-page linking" />
        </Field>
        <Field $last>
          <label htmlFor="element-tag">Tag</label>
          <SelectWrap $inset={20}>
            <Select id="element-tag">
              <option>Div</option>
            </Select>
            <Caret />
          </SelectWrap>
        </Field>
      </Group>
      <Head>Collection List Settings</Head>
      <Group $line $pad="16px 16px 18px">
        <Field>
          <label htmlFor="source">Source</label>
          <SelectWrap $inset={16}>
            <Select id="source" $purple>
              <option>Categories</option>
            </Select>
            <Icon w={20} h={24}>
              <path fillRule="evenodd" d="M0 10h2C2-3 18-3 18 10h2v14H0zm5 0h10c0-7-10-7-10 0zm3 4v6h4v-6z" />
            </Icon>
          </SelectWrap>
        </Field>
        <Field $last>
          UI State
          <Segments>
            <Segment $active>Items</Segment>
            <Segment>Empty</Segment>
          </Segments>
        </Field>
        <FieldLabel>Layout</FieldLabel>
        <LayoutPicker />
      </Group>
      <Group $line>
        <ListHead>
          Filters
          <AddButton aria-label="Add filter">
            <Plus />
          </AddButton>
        </ListHead>
        <Row $filled>
          Produits Intégrés does not contai...
          <IconButton aria-label="Delete filter">
            <Line w={18} h={22} color="#8c8c8c">
              <path d="M0 5h18M6 5V1h6v4M3 6v15h12V6M7 8v11M11 8v11" />
            </Line>
          </IconButton>
        </Row>
      </Group>
      <Group $line>
        <ListHead />
        <Row />
      </Group>
      <Group $pad="54px 16px 16px">
        <Row />
        <Row $spaced />
      </Group>
      <Head>Dynamic Style Settings</Head>
      <Group $pad="16px 16px 16px">
        {bindings.map((text) => (
          <Binding key={text}>
            <Tick type="checkbox" />
            {text}
            <strong>
              <Tag />
              Products
            </strong>
          </Binding>
        ))}
      </Group>
      <Head>Custom Attributes</Head>
      <Group>
        <ListHead>
          {"Custom <div> attributes"}
          <AddButton aria-label="Add attribute">
            <Plus />
          </AddButton>
        </ListHead>
        <Row $center>None</Row>
      </Group>
      <Head>Search Index Settings</Head>
      <Exclude>
        <TickWrap>
          <Tick type="checkbox" defaultChecked />
          <Line w={20} h={16} width={4}>
            <path d="M1 8l6 6L19 1" />
          </Line>
        </TickWrap>
        <Icon w={35} h={36}>
          <path d="M13 9a10 10 0 1 0 9 12M20 25l9 9" fill="none" stroke="#404040" strokeWidth="5" />
          <circle cx="24" cy="10" r="10" />
          <path d="M18 10h12" stroke="#262626" strokeWidth="3" />
        </Icon>
        Exclude Collection List Wrapper’s content from site search results
      </Exclude>
    </Scroll>
    <Modal>
      <ModalHead>
        Edit Filter
        <IconButton aria-label="Close filter">
          <Cross w={20} />
        </IconButton>
      </ModalHead>
      <ModalBody>
        {filterParts.map((part) => (
          <SelectWrap key={part}>
            <Select $modal aria-label={part}>
              <option>{part}</option>
            </Select>
            <Caret />
          </SelectWrap>
        ))}
        <Save>Save</Save>
      </ModalBody>
    </Modal>
  </Settings>
);

const App = () => {
  return (
    <Page>
      <GlobalStyle />
      <Browser />
      <Builder>
        <Main>
          <Toolbar />
          <Workspace>
            <LeftRail />
            <Gutter />
            <Navigator />
            <Stage>
              <Canvas />
              <Crumbs />
            </Stage>
          </Workspace>
        </Main>
        <SettingsPanel />
      </Builder>
    </Page>
  );
};

export default App;
